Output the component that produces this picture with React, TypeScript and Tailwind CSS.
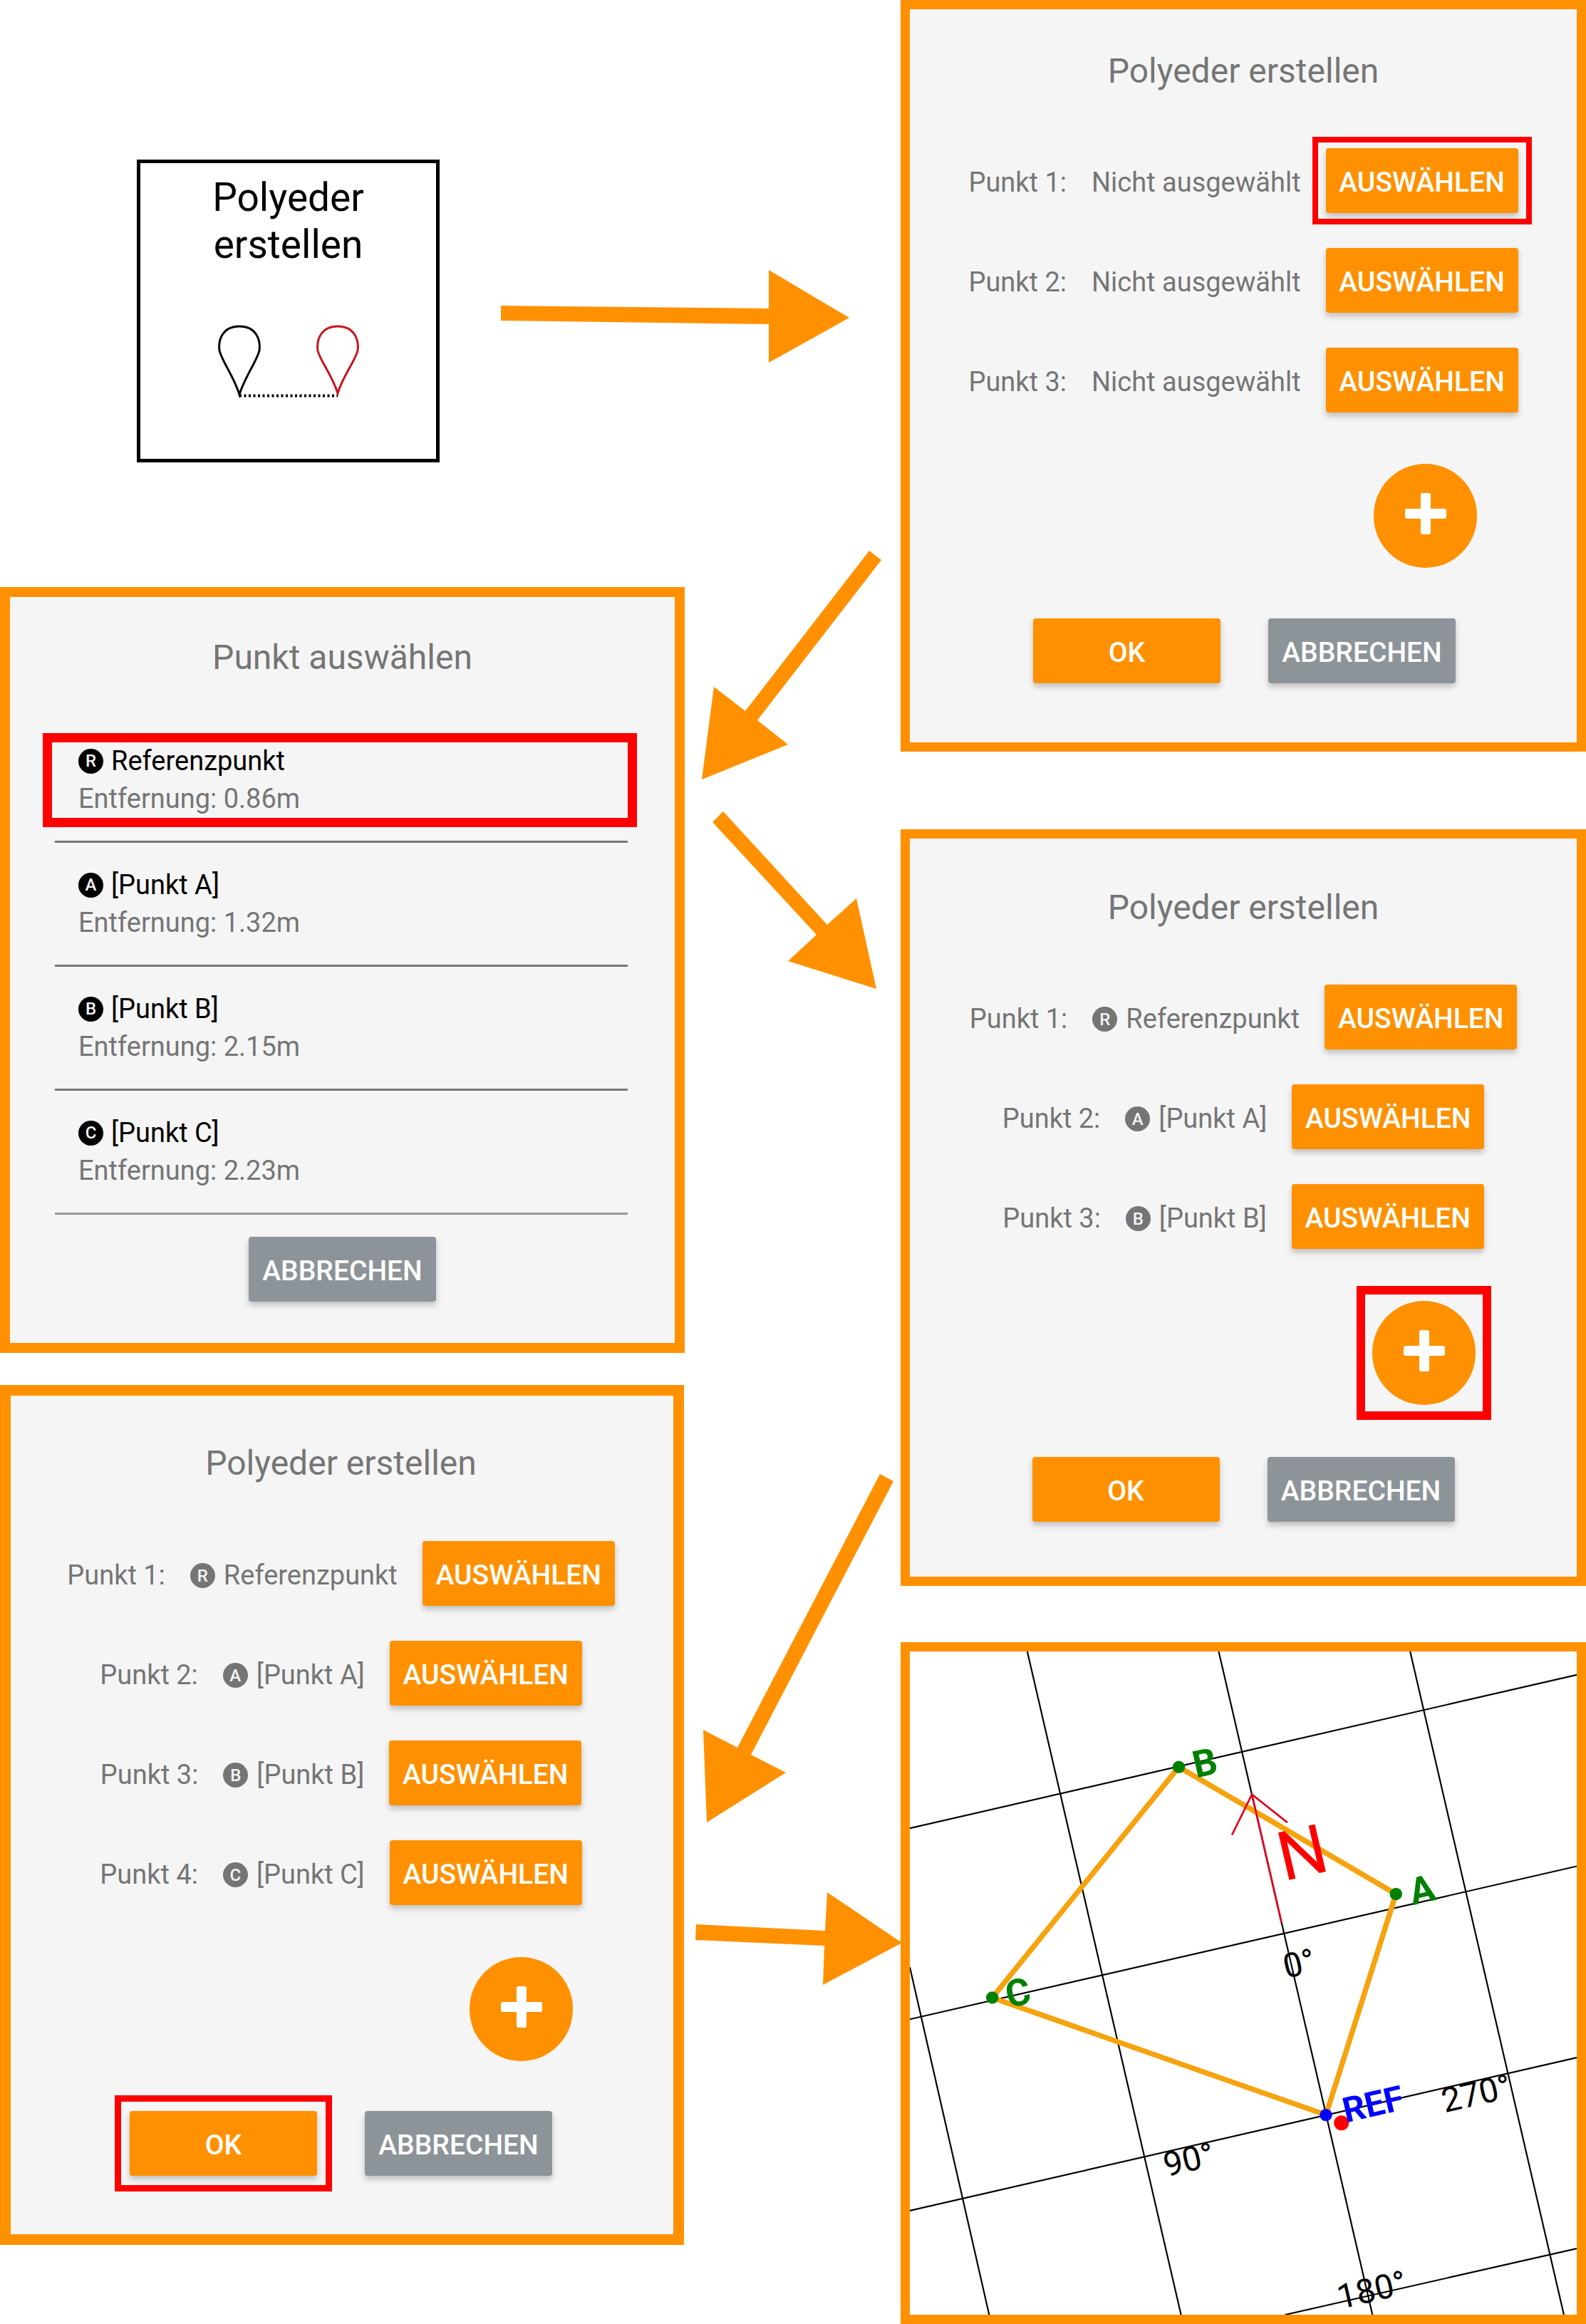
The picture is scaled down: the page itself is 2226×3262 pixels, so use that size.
const arrows = [
  '703,429 1079,433 1079,379 1192,446 1079,509 1079,455 703,450',
  '1220,773 1237,786 1063,1011 1106,1045 985,1094 1002,964 1046,998',
  '1015,1139 1161,1298 1202,1261 1230,1388 1106,1349 1146,1312 1000,1154',
  '1235,2069 1254,2079 1054,2463 1103,2488 992,2558 987,2428 1035,2453',
  '977,2701 1158,2710 1161,2656 1266,2727 1155,2786 1157,2731 976,2723',
];

function ActionButton({ label, gray, wide }: { label: string; gray?: boolean; wide?: boolean }) {
  return (
    <button
      type="button"
      className={`flex h-[91px] items-center justify-center rounded-[4px] pt-[6px] text-[39px] font-medium text-white shadow-[0_5px_9px_rgba(0,0,0,0.22)] ${
        gray ? 'bg-[#8d9499]' : 'bg-[#ff9100]'
      } ${wide ? 'w-[263px]' : 'w-[270px]'}`}
    >
      {label}
    </button>
  );
}

function Badge({ letter, dark }: { letter: string; dark?: boolean }) {
  return (
    <span
      className={`flex h-[35px] w-[35px] shrink-0 items-center justify-center rounded-full text-[24px] font-medium leading-none text-[#f5f5f5] ${
        dark ? 'bg-black' : 'bg-[#757575]'
      }`}
    >
      {letter}
    </span>
  );
}

function Fab({ className }: { className?: string }) {
  return (
    <div className={`relative h-[146px] w-[145px] rounded-full bg-[#ff9100] ${className ?? ''}`}>
      <svg viewBox="0 0 58 58" className="absolute left-[44px] top-[41px] h-[58px] w-[58px]">
        <path d="M25 0h8a3 3 0 0 1 3 3v19h19a3 3 0 0 1 3 3v8a3 3 0 0 1-3 3H36v19a3 3 0 0 1-3 3h-8a3 3 0 0 1-3-3V36H3a3 3 0 0 1-3-3v-8a3 3 0 0 1 3-3h19V3a3 3 0 0 1 3-3z" fill="#fff" />
      </svg>
    </div>
  );
}

function PointRow({ index, letter, name, empty, highlight }: { index: number; letter?: string; name: string; empty?: boolean; highlight?: boolean }) {
  return (
    <div className="flex h-[91px] items-center justify-center gap-[35px] text-[38px] text-[#757575]">
      <span className="pt-[6px] leading-[85px]">Punkt {index}:</span>
      {empty ? (
        <span className="pt-[6px] leading-[85px]">{name}</span>
      ) : (
        <span className="flex items-center gap-[12px] pt-[6px] leading-[85px]">
          <Badge letter={letter ?? ''} />
          {name}
        </span>
      )}
      <div className="relative">
        <ActionButton label="AUSWÄHLEN" />
        {highlight && <div className="absolute -inset-x-[19px] -inset-y-[16px] border-[8px] border-[#ff0000]" />}
      </div>
    </div>
  );
}

function MapView() {
  return (
    <svg viewBox="43 44 1505 1504" preserveAspectRatio="none" className="h-full w-full font-['Roboto',sans-serif]">
      <g stroke="#000" strokeWidth="3.5" fill="none">
        <line x1="43" y1="445" x2="1548" y2="97" />
        <line x1="43" y1="878" x2="1548" y2="531" />
        <line x1="43" y1="1312" x2="1548" y2="965" />
        <line x1="890" y1="1548" x2="1548" y2="1398" />
        <line x1="43" y1="760" x2="222" y2="1548" />
        <line x1="308" y1="44" x2="655" y2="1548" />
        <line x1="740" y1="44" x2="1087" y2="1548" />
        <line x1="1172" y1="44" x2="1519" y2="1548" />
      </g>
      <polygon points="650,306 1140,594 982,1095 229,829" fill="none" stroke="#f5a30f" strokeWidth="12" />
      <g stroke="#dc0a24" strokeWidth="4.5" fill="none">
        <polyline points="882,660 815,368" />
        <polyline points="770,460 815,368 895,432" />
      </g>
      <text x="928" y="554" textAnchor="middle" transform="rotate(-13 928 498)" fontSize="155" fill="#ff0000">N</text>
      <g fill="#008000">
        <circle cx="650" cy="306" r="14" />
        <circle cx="1140" cy="594" r="14" />
        <circle cx="229" cy="829" r="14" />
      </g>
      <circle cx="982" cy="1095" r="14" fill="#0000ff" />
      <circle cx="1017" cy="1113" r="17" fill="#ff0000" />
      <g fill="#008000" fontSize="85" fontWeight="700" textAnchor="middle">
        <text x="709" y="326" transform="rotate(-13 709 297)">B</text>
        <text x="1199" y="614" transform="rotate(-13 1199 585)">A</text>
        <text x="287" y="847" transform="rotate(-13 287 818)">C</text>
      </g>
      <text x="1088" y="1098" textAnchor="middle" transform="rotate(-13 1088 1070)" fontSize="79" fontWeight="700" fill="#0000ff">REF</text>
      <g fill="#000" fontSize="77" textAnchor="middle">
        <text x="921" y="778" transform="rotate(-13 921 750)">0°</text>
        <text x="672" y="1223" transform="rotate(-13 672 1195)">90°</text>
        <text x="1321" y="1073" transform="rotate(-13 1321 1045)">270°</text>
        <text x="1085" y="1518" transform="rotate(-13 1085 1490)">180°</text>
      </g>
    </svg>
  );
}

export default function App() {
  const list = [
    { letter: 'R', name: 'Referenzpunkt', dist: '0.86m' },
    { letter: 'A', name: '[Punkt A]', dist: '1.32m' },
    { letter: 'B', name: '[Punkt B]', dist: '2.15m' },
    { letter: 'C', name: '[Punkt C]', dist: '2.23m' },
  ];

  return (
    <div className="relative h-[3262px] w-[2226px] overflow-hidden bg-white font-['Roboto',sans-serif]">
      {/* toolbar button */}
      <div className="absolute left-[192px] top-[224px] h-[425px] w-[425px] border-[5px] border-black pt-[15px] text-black">
        <p className="text-center text-[55px] leading-[66px]">
          Polyeder
          <br />
          erstellen
        </p>
        <svg viewBox="0 0 200 102" className="mx-auto mt-[80px] h-[102px] w-[200px]">
          <path d="M31 98C24 74 6 50 3 36 1 20 8 2 31 2c23 0 30 18 28 34-3 14-21 38-28 62z" fill="none" stroke="#000" strokeWidth="3" />
          <path d="M169 96C162 72 144 50 141 36c-2-16 5-34 28-34 23 0 30 18 28 34-3 14-21 36-28 60z" fill="none" stroke="#c8141e" strokeWidth="3" />
          <line x1="31" y1="99.5" x2="169" y2="99.5" stroke="#000" strokeWidth="4" strokeDasharray="3 3.5" />
        </svg>
      </div>

      {/* step 1 */}
      <section className="absolute left-[1264px] top-0 h-[1055px] w-[962px] border-[13px] border-[#ff9100] bg-[#f5f5f5] pt-[57px]">
        <h2 className="text-center text-[48px] font-normal leading-[60px] text-[#757575]">Polyeder erstellen</h2>
        <div className="mt-[78px] flex flex-col gap-[49px]">
          <PointRow index={1} name="Nicht ausgewählt" empty highlight />
          <PointRow index={2} name="Nicht ausgewählt" empty />
          <PointRow index={3} name="Nicht ausgewählt" empty />
        </div>
        <Fab className="ml-auto mr-[140px] mt-[72px]" />
        <div className="mt-[71px] flex justify-center gap-[67px] pl-[3px]">
          <ActionButton label="OK" wide />
          <ActionButton label="ABBRECHEN" gray wide />
        </div>
      </section>

      {/* point picker */}
      <section className="absolute left-0 top-[824px] h-[1075px] w-[961px] border-[14px] border-[#ff9100] bg-[#f5f5f5] pt-[55px]">
        <h2 className="text-center text-[48px] font-normal leading-[60px] text-[#757575]">Punkt auswählen</h2>
        <ul className="ml-[63px] mt-[56px] w-[804px]">
          {list.map((item, i) => (
            <li
              key={item.letter}
              className={`relative flex h-[174px] flex-col justify-center border-b-[3px] pl-[33px] text-[38px] leading-[53px] ${
                i === 3 ? 'border-[#999]' : 'border-[#777]'
              }`}
            >
              <span className="flex items-center gap-[11px] text-black">
                <Badge letter={item.letter} dark />
                {item.name}
              </span>
              <span className="text-[#757575]">Entfernung: {item.dist}</span>
              {i === 0 && (
                <div className="absolute -left-[17px] -right-[13px] top-[20px] h-[132px] border-[13px] border-[#ff0000]" />
              )}
            </li>
          ))}
        </ul>
        <div className="mt-[31px] flex justify-center">
          <ActionButton label="ABBRECHEN" gray wide />
        </div>
      </section>

      {/* step 2 */}
      <section className="absolute left-[1264px] top-[1164px] h-[1062px] w-[962px] border-[13px] border-[#ff9100] bg-[#f5f5f5] pt-[67px]">
        <h2 className="text-center text-[48px] font-normal leading-[60px] text-[#757575]">Polyeder erstellen</h2>
        <div className="mt-[78px] flex flex-col gap-[49px]">
          <PointRow index={1} letter="R" name="Referenzpunkt" />
          <PointRow index={2} letter="A" name="[Punkt A]" />
          <PointRow index={3} letter="B" name="[Punkt B]" />
        </div>
        <div className="relative ml-auto mr-[142px] mt-[73px] w-[145px]">
          <Fab />
          <div className="absolute -inset-x-[22px] -inset-y-[21px] border-[12px] border-[#ff0000]" />
        </div>
        <div className="mt-[73px] flex justify-center gap-[67px]">
          <ActionButton label="OK" wide />
          <ActionButton label="ABBRECHEN" gray wide />
        </div>
      </section>

      {/* step 3 */}
      <section className="absolute left-0 top-[1944px] h-[1207px] w-[960px] border-[15px] border-[#ff9100] bg-[#f5f5f5] pr-[3px] pt-[65px]">
        <h2 className="text-center text-[48px] font-normal leading-[60px] text-[#757575]">Polyeder erstellen</h2>
        <div className="mt-[79px] flex flex-col gap-[49px]">
          <PointRow index={1} letter="R" name="Referenzpunkt" />
          <PointRow index={2} letter="A" name="[Punkt A]" />
          <PointRow index={3} letter="B" name="[Punkt B]" />
          <PointRow index={4} letter="C" name="[Punkt C]" />
        </div>
        <Fab className="ml-auto mr-[138px] mt-[73px]" />
        <div className="mt-[70px] flex justify-center gap-[67px]">
          <div className="relative">
            <ActionButton label="OK" wide />
            <div className="absolute -inset-x-[21px] -inset-y-[22px] border-[9px] border-[#ff0000]" />
          </div>
          <ActionButton label="ABBRECHEN" gray wide />
        </div>
      </section>

      {/* result */}
      <section className="absolute left-[1264px] top-[2305px] h-[957px] w-[962px] border-[13px] border-[#ff9100] bg-white">
        <MapView />
      </section>

      {/* flow arrows */}
      <svg viewBox="0 0 2226 3262" className="pointer-events-none absolute inset-0 h-full w-full">
        {arrows.map(points => (
          <polygon key={points} points={points} fill="#ff9100" />
        ))}
      </svg>
    </div>
  );
}
